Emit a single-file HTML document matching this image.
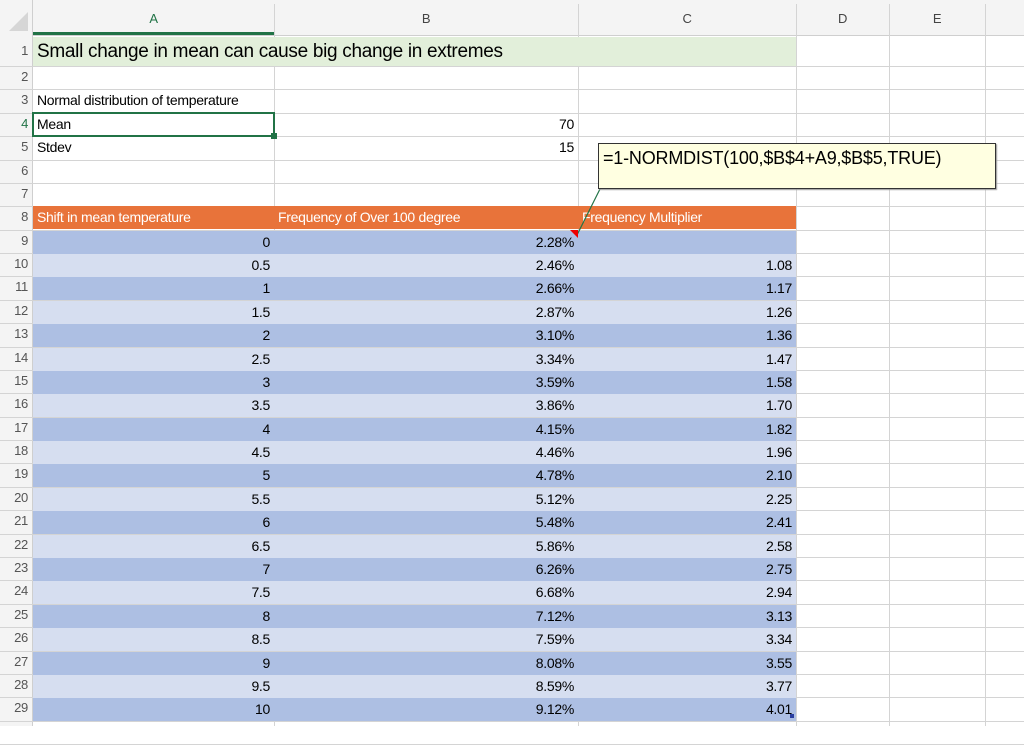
<!DOCTYPE html>
<html><head><style>
body{margin:0;width:1024px;height:726px;overflow:hidden;background:#fff;font-family:"Liberation Sans",sans-serif;position:relative}
.a{position:absolute;box-sizing:border-box}
.t{position:absolute;font-size:14px;color:#000;white-space:nowrap;letter-spacing:-0.3px}
</style></head><body>
<div class="a" style="left:0;top:0;width:1024px;height:36px;background:#f4f4f4;border-bottom:1px solid #cfcfcf"></div>
<div class="a" style="left:0;top:0;width:33px;height:726px;background:#f4f4f4;border-right:1px solid #cfcfcf"></div>
<svg class="a" style="left:6px;top:10px" width="24" height="22"><polygon points="22,2 22,21 3,21" fill="#d6d6d6"/></svg>
<div class="a" style="left:33px;top:32px;width:241px;height:3px;background:#217346"></div>
<div id="g"></div>
<script>
var cols=[33,274,578,796,889,985,1060],names=["A","B","C","D","E"];
var h="";
for(var i=0;i<5;i++){h+='<div class="t" style="left:'+cols[i]+'px;width:'+(cols[i+1]-cols[i])+'px;top:11px;text-align:center;color:'+(i==0?'#217346':'#444')+';font-size:13px">'+names[i]+'</div>';}
for(var i=1;i<6;i++)h+='<div class="a" style="left:'+cols[i]+'px;top:4px;width:1px;height:722px;background:#d4d4d4"></div>';
function rt(r){return r==1?37:66+(r-2)*23.38}
for(var r=1;r<=30;r++){var y=rt(r);h+='<div class="a" style="left:0;top:'+Math.round(y+(r==1?29:23.38))+'px;width:1024px;height:1px;background:#d4d4d4"></div>';
if(r<=29)h+='<div class="t" style="left:0;width:28px;text-align:right;top:'+Math.round(y+(r==1?6:3))+'px;color:'+(r==4?'#217346':'#555')+';font-size:13px">'+r+'</div>';}
h+='<div class="a" style="left:33px;top:37px;width:763px;height:29px;background:#e2efda"></div>';
h+='<div class="t" style="left:37px;top:41px;font-size:19px">Small change in mean can cause big change in extremes</div>';
var y8=rt(8);
h+='<div class="a" style="left:33px;top:'+y8+'px;width:763px;height:23px;background:#e8733a"></div>';
h+='<div class="t" style="left:37px;top:'+(y8+3)+'px;color:#fff">Shift in mean temperature</div><div class="t" style="left:278px;top:'+(y8+3)+'px;color:#fff">Frequency of Over 100 degree</div><div class="t" style="left:582px;top:'+(y8+3)+'px;color:#fff">Frequency Multiplier</div>';
h+='<div class="t" style="left:37px;top:'+(rt(3)+3)+'px">Normal distribution of temperature</div>';
h+='<div class="t" style="left:37px;top:'+(rt(4)+3)+'px">Mean</div><div class="t" style="left:37px;top:'+(rt(5)+3)+'px">Stdev</div>';
h+='<div class="t" style="left:274px;width:300px;text-align:right;top:'+(rt(4)+3)+'px">70</div><div class="t" style="left:274px;width:300px;text-align:right;top:'+(rt(5)+3)+'px">15</div>';
h+='<div class="a" style="left:32px;top:'+(rt(4)-1)+'px;width:243px;height:25px;border:2px solid #217346"></div><div class="a" style="left:271px;top:'+(rt(4)+20)+'px;width:6px;height:6px;background:#217346"></div>';
var f=["2.28%","2.46%","2.66%","2.87%","3.10%","3.34%","3.59%","3.86%","4.15%","4.46%","4.78%","5.12%","5.48%","5.86%","6.26%","6.68%","7.12%","7.59%","8.08%","8.59%","9.12%"];
var m=["","1.08","1.17","1.26","1.36","1.47","1.58","1.70","1.82","1.96","2.10","2.25","2.41","2.58","2.75","2.94","3.13","3.34","3.55","3.77","4.01"];
for(var k=0;k<21;k++){var y=rt(9+k);
h+='<div class="a" style="left:33px;top:'+Math.round(y+1)+'px;width:763px;height:23px;background:'+(k%2==0?'#adbfe3':'#d6def0')+'"></div>';
h+='<div class="t" style="left:33px;width:237px;text-align:right;top:'+(y+4)+'px">'+(k/2)+'</div>';
h+='<div class="t" style="left:274px;width:300px;text-align:right;top:'+(y+4)+'px">'+f[k]+'</div>';
h+='<div class="t" style="left:578px;width:214px;text-align:right;top:'+(y+4)+'px">'+m[k]+'</div>';}
document.getElementById('g').innerHTML=h;
</script>
<svg class="a" style="left:0;top:0" width="1024" height="726"><line x1="600" y1="189" x2="577" y2="235" stroke="#217346" stroke-width="1.2"/><polygon points="570,230 578,230 578,238" fill="#e00"/><rect x="790" y="714" width="4" height="4" fill="#2b3fa0"/></svg>
<div class="a" style="left:598px;top:143px;width:398px;height:46px;background:#ffffe1;border:1px solid #333;box-shadow:1px 1px 1px #999"></div>
<div class="t" style="left:603px;top:148px;font-size:18px;letter-spacing:-0.2px">=1-NORMDIST(100,$B$4+A9,$B$5,TRUE)</div>
</body></html>
